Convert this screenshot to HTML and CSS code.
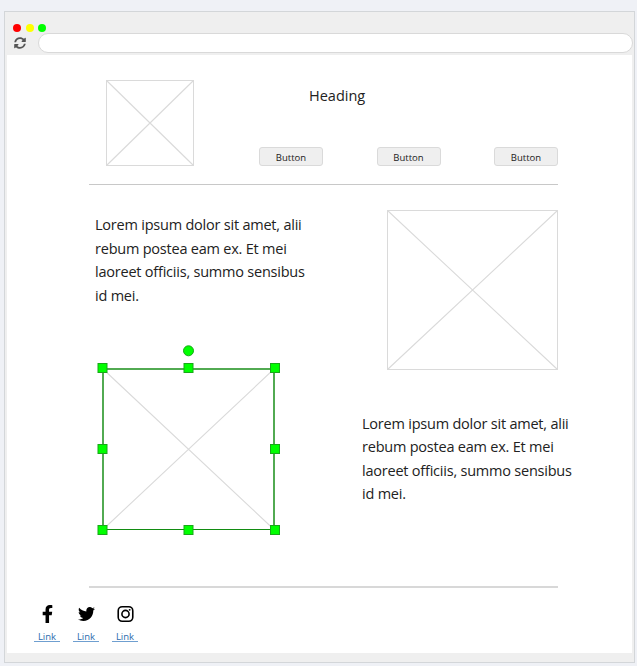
FILE: index.html
```html
<!DOCTYPE html>
<html lang="en">
<head>
<meta charset="utf-8">
<title>Wireframe</title>
<link rel="stylesheet" href="styles.css">
</head>
<body>
<div class="window">
  <div class="chrome">
    <div class="dots"><i class="dot red"></i><i class="dot yellow"></i><i class="dot green"></i></div>
    <div class="toolbar">
      <svg class="refresh" viewBox="0 0 512 512"><path d="M370.72 133.28C339.458 104.008 298.888 87.962 255.848 88c-77.458.068-144.328 53.178-162.791 126.85-1.344 5.363-6.122 9.15-11.651 9.15H24.103c-7.498 0-13.194-6.807-11.807-14.176C33.933 94.924 134.813 8 256 8c66.448 0 126.791 26.136 171.315 68.685L463.03 40.97C478.149 25.851 504 36.559 504 57.941V192c0 13.255-10.745 24-24 24H345.941c-21.382 0-32.09-25.851-16.971-40.971l41.75-41.749zM32 296h134.059c21.382 0 32.09 25.851 16.971 40.971l-41.75 41.75c31.262 29.273 71.835 45.319 114.876 45.28 77.418-.07 144.315-53.144 162.787-126.849 1.344-5.363 6.122-9.15 11.651-9.15h57.304c7.498 0 13.194 6.807 11.807 14.176C478.067 417.076 377.187 504 256 504c-66.448 0-126.791-26.136-171.315-68.685L48.97 471.03C33.851 486.149 8 475.441 8 454.059V320c0-13.255 10.745-24 24-24z"/></svg>
      <div class="address"></div>
    </div>
  </div>
  <main class="page">
    <header class="header">
      <svg class="logo" viewBox="0 0 88 86"><path class="cross" d="M.5 .5L87.5 85.5M87.5 .5L.5 85.5"/><rect class="frame" x=".5" y=".5" width="87" height="85"/></svg>
      <div class="intro">
        <h1>Heading</h1>
        <nav><button>Button</button><button>Button</button><button>Button</button></nav>
      </div>
    </header>
    <section class="row first">
      <p>Lorem ipsum dolor sit amet, alii<br>rebum postea eam ex. Et mei<br>laoreet officiis, summo sensibus<br>id mei.</p>
      <svg class="picture" viewBox="0 0 171 160"><path class="cross" d="M.5 .5L170.5 159.5M170.5 .5L.5 159.5"/><rect class="frame" x=".5" y=".5" width="170" height="159"/></svg>
    </section>
    <section class="row second">
      <svg class="selection" viewBox="0 0 184 192">
        <path class="cross" d="M7 25L178 185.5M178 25L7 185.5"/>
        <path class="outline thick" d="M6 25H179"/>
        <path class="outline thick" d="M7 24V186M178 24V186"/>
        <path class="outline bottom" d="M6 185.5H179"/>
        <g class="handle">
          <circle cx="92.5" cy="6.8" r="5"/>
          <rect x="2" y="19.5" width="9" height="9"/><rect x="88" y="19.5" width="9" height="9"/><rect x="174.5" y="19.5" width="9" height="9"/>
          <rect x="2" y="100.5" width="9" height="9"/><rect x="174.5" y="100.5" width="9" height="9"/>
          <rect x="2" y="181.5" width="9" height="9"/><rect x="88" y="181.5" width="9" height="9"/><rect x="174.5" y="181.5" width="9" height="9"/>
        </g>
      </svg>
      <p>Lorem ipsum dolor sit amet, alii<br>rebum postea eam ex. Et mei<br>laoreet officiis, summo sensibus<br>id mei.</p>
    </section>
    <footer class="social">
      <div class="item"><svg viewBox="0 0 320 512"><path d="M279.14 288l14.22-92.66h-88.91v-60.13c0-25.35 12.42-50.06 52.24-50.06h40.42V6.26S260.43 0 225.36 0c-73.22 0-121.08 44.38-121.08 124.72v70.62H22.89V288h81.39v224h100.17V288z"/></svg><a>Link</a></div>
      <div class="item"><svg viewBox="0 0 512 512"><path d="M459.37 151.716c.325 4.548.325 9.097.325 13.645 0 138.72-105.583 298.558-298.558 298.558-59.452 0-114.68-17.219-161.137-47.106 8.447.974 16.568 1.299 25.34 1.299 49.055 0 94.213-16.568 130.274-44.832-46.132-.975-84.792-31.188-98.112-72.772 6.498.974 12.995 1.624 19.818 1.624 9.421 0 18.843-1.3 27.614-3.573-48.081-9.747-84.143-51.98-84.143-102.985v-1.299c13.969 7.797 30.214 12.67 47.431 13.319-28.264-18.843-46.781-51.005-46.781-87.391 0-19.492 5.197-37.36 14.294-52.954 51.655 63.675 129.3 105.258 216.365 109.807-1.624-7.797-2.599-15.918-2.599-24.04 0-57.828 46.782-104.934 104.934-104.934 30.213 0 57.502 12.67 76.67 33.137 23.715-4.548 46.456-13.32 66.599-25.34-7.798 24.366-24.366 44.833-46.132 57.827 21.117-2.273 41.584-8.122 60.426-16.243-14.292 20.791-32.161 39.308-52.628 54.253z"/></svg><a>Link</a></div>
      <div class="item"><svg class="camera" viewBox="0 0 18 18"><rect x="1.3" y="1.3" width="15.4" height="15.4" rx="4.2"/><circle cx="9" cy="9" r="3.8"/><circle class="lens" cx="13.4" cy="4.6" r="1"/></svg><a>Link</a></div>
    </footer>
  </main>
</div>
</body>
</html>
```
FILE: styles.css
```css
* { box-sizing: border-box; }
body {
  margin: 0;
  padding: 11px 2px 3px 4px;
  background: #eff1f6;
  color: #222;
  font-family: "Open Sans", "Noto Sans", sans-serif;
}
svg { display: block; flex: none; }
.window {
  height: 652px;
  padding: 0 2px;
  border: 1px solid #d3d6d9;
  background: #efefef;
}
.chrome { height: 43px; padding-top: 12px; }
.dots { display: flex; gap: 4.5px; padding-left: 6px; }
.dot { width: 8px; height: 8px; border-radius: 50%; }
.red { background: #f00; }
.yellow { background: #ff0; }
.green { background: #0f0; }
.toolbar { display: flex; align-items: center; height: 20px; margin: 1px -1px 0 0; }
.refresh { width: 12px; height: 12px; margin: 0 12px 0 7px; fill: #555; }
.address { flex: 1; height: 20px; border: 1px solid #d9d9d9; border-radius: 10px; background: #fff; }
.page { height: 598px; background: #fff; padding-left: 27px; overflow: hidden; }
.header {
  display: flex;
  width: 469px;
  height: 130px;
  margin-left: 55px;
  padding: 25px 0 0 17px;
  border-bottom: 1px solid #c8c8c8;
}
.logo { width: 88px; height: 86px; }
.cross { fill: none; stroke: #dadada; stroke-width: 1.1; }
.frame { fill: none; stroke: #dadada; }
.intro { width: 299px; margin-left: 65px; }
h1 { margin: 5px 0 0 50px; font-size: 14.5px; line-height: 22px; font-weight: 400; }
nav { display: flex; justify-content: space-between; margin-top: 40px; }
button {
  width: 64px;
  height: 19px;
  padding: 2px 0 0;
  border: 1px solid #dadada;
  border-radius: 3px;
  background: #efefef;
  color: #222;
  font: 9.5px/14px "Open Sans", sans-serif;
}
.row { display: flex; margin-left: 55px; width: 500px; }
p { margin: 0; font-size: 14.5px; line-height: 23.6px; letter-spacing: -0.22px; white-space: nowrap; }
.first { height: 159px; }
.first p { width: 298px; padding: 28px 0 0 6px; }
.picture { width: 171px; height: 160px; margin-top: 25px; }
.second { height: 242px; }
.selection { width: 184px; height: 192px; margin-left: 7px; }
.second p { margin-left: 82px; padding-top: 67.5px; }
.social {
  display: flex;
  gap: 13px;
  width: 524px;
  padding-top: 18px;
  background: linear-gradient(#d8d8d8, #d8d8d8) 55px 0 / 469px 2px no-repeat;
}
.item { display: flex; flex-direction: column; align-items: center; width: 26px; }
.item svg { width: 17px; height: 20px; padding: 1px 0; fill: #000; }
.item .camera { fill: none; stroke: #000; stroke-width: 1.7; }
.camera .lens { fill: #000; stroke: none; }
.item a {
  width: 26px;
  height: 15px;
  margin-top: 3px;
  padding-top: 2px;
  border-bottom: 1px solid #6f9fd0;
  color: #2c6bad;
  font-size: 9.5px;
  line-height: 15px;
  text-align: center;
}
.outline { fill: none; stroke: #128c12; stroke-width: 1; }
.thick { stroke: #52aa52; stroke-width: 2; }
.bottom { stroke-width: 1.2; }
.handle { fill: #0f0; stroke: #18a818; }
```
